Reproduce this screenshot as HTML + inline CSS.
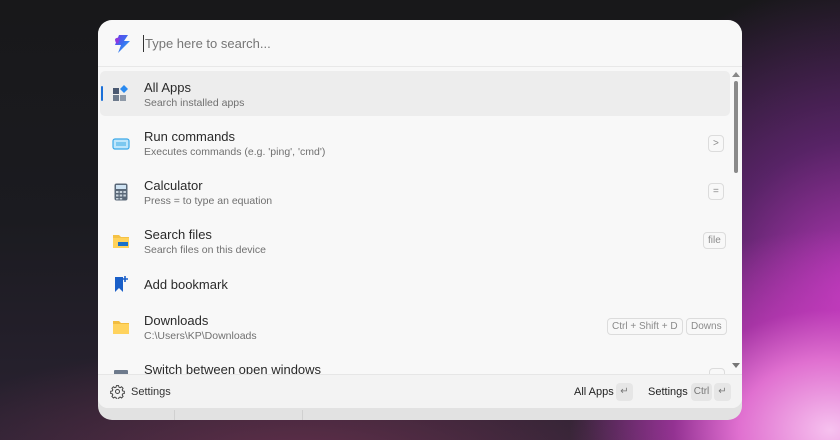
<!DOCTYPE html>
<html><head><meta charset="utf-8"><style>
*{margin:0;padding:0;box-sizing:border-box}
body{width:840px;height:440px;overflow:hidden;font-family:"Liberation Sans",sans-serif;position:relative;
background:
radial-gradient(ellipse 260px 200px at 830px 430px,#f6c0ee 0%,#e070d0 35%,rgba(200,60,190,0.6) 60%,rgba(120,40,130,0) 100%),
radial-gradient(ellipse 300px 320px at 860px 300px,rgba(200,60,200,0.95) 0%,rgba(120,40,140,0.65) 50%,rgba(40,30,60,0) 100%),
radial-gradient(ellipse 400px 120px at 300px 460px,rgba(110,50,80,0.8) 0%,rgba(60,30,50,0) 100%),
linear-gradient(180deg,#18181a 0%,#1b1b20 50%,#2a2232 100%);}
.win{position:absolute;left:98px;top:20px;width:644px;height:400px;border-radius:14px;background:#e2e2e2;overflow:hidden}
.main{position:absolute;left:0;top:0;width:644px;height:388px;background:#f8f8f8;border-radius:14px 14px 10px 10px;overflow:hidden}
.hdr{position:absolute;left:0;top:0;width:644px;height:47px;border-bottom:1px solid #e8e8e8}
.ph{position:absolute;left:47px;top:16px;font-size:13px;color:#767676}
.cur{position:absolute;left:45px;top:15px;width:1px;height:17px;background:#333}
.row{position:absolute;left:2px;width:630px}
.sel{background:#ededed;border-radius:5px}
.t{position:absolute;left:46px;font-size:13px;color:#2a2a2a}
.s{position:absolute;left:46px;font-size:10.5px;color:#707070}
.ic{position:absolute;left:14px}
.k{position:absolute;height:17px;border:1px solid #dcdcdc;border-radius:4px;font-size:10px;color:#8a8a8a;line-height:15px;padding:0 4px;background:#f8f8f8}
.foot{position:absolute;left:0;top:354px;width:644px;height:34px;background:#f3f3f3;border-top:1px solid #e6e6e6}
.fk{position:absolute;height:18px;border-radius:4px;background:#e6e6e6;font-size:10px;color:#777;line-height:18px;text-align:center}
</style></head><body>
<div class="win">
<div class="main">
<div class="hdr">
<svg style="position:absolute;left:15px;top:14px" width="18" height="20" viewBox="0 0 18 20"><defs><linearGradient id="g" x1="0" y1="0" x2="1" y2="1"><stop offset="0" stop-color="#6a3de8"/><stop offset="0.5" stop-color="#3a6ff0"/><stop offset="1" stop-color="#30c0f0"/></linearGradient></defs><path d="M6 1 L15 1 L11 7 L17 7 L5 19 L8 11 L2 11 Z" fill="url(#g)"/><path d="M2 5 Q4 3 7 4 L5 10 Q2 9 2 5Z" fill="#8a3be0"/></svg>
<div class="cur"></div><div class="ph">Type here to search...</div>
</div>
<div class="row sel" style="top:51px;height:45px"></div>
<div style="position:absolute;left:3px;top:66px;width:2px;height:15px;background:#1a6fd8;border-radius:1px"></div>
<svg class="ic" style="top:65px" width="18" height="17" viewBox="0 0 18 17"><rect x="1" y="3" width="6" height="6" fill="#4a5870"/><rect x="1" y="10" width="6" height="6" fill="#6d7a8c"/><rect x="8" y="10" width="6" height="6" fill="#8f9aa8"/><path d="M12 0 L16 4 L12 8 L8 4Z" fill="#2a8af0"/></svg>
<div class="t" style="top:60px">All Apps</div><div class="s" style="top:77px">Search installed apps</div>

<svg class="ic" style="top:117px" width="18" height="14" viewBox="0 0 18 14"><rect x="1" y="2" width="16" height="10" rx="2" fill="#bfe6fb" stroke="#3aa8e8" stroke-width="1.2"/><rect x="4" y="5" width="10" height="4" fill="#7cc8f0"/></svg>
<div class="t" style="top:109px">Run commands</div><div class="s" style="top:126px">Executes commands (e.g. 'ping', 'cmd')</div>
<div class="k" style="left:610px;top:115px">&gt;</div>

<svg class="ic" style="top:163px;left:16px" width="14" height="18" viewBox="0 0 14 18"><rect x="0.5" y="0.5" width="13" height="17" rx="2" fill="#5a6878"/><rect x="2" y="2" width="10" height="4" fill="#cfe3f3"/><g fill="#c9d3dc"><rect x="2" y="8" width="2.5" height="2"/><rect x="5.7" y="8" width="2.5" height="2"/><rect x="9.4" y="8" width="2.5" height="2"/><rect x="2" y="11.5" width="2.5" height="2"/><rect x="5.7" y="11.5" width="2.5" height="2"/><rect x="9.4" y="11.5" width="2.5" height="2"/><rect x="2" y="15" width="2.5" height="1.5"/><rect x="5.7" y="15" width="2.5" height="1.5"/></g></svg>
<div class="t" style="top:158px">Calculator</div><div class="s" style="top:175px">Press = to type an equation</div>
<div class="k" style="left:610px;top:163px">=</div>

<svg class="ic" style="top:213px" width="18" height="16" viewBox="0 0 18 16"><path d="M1 2 H7 L9 4 H17 V15 H1Z" fill="#f5c246"/><rect x="1" y="5" width="16" height="10" fill="#ffd25a"/><rect x="6" y="9" width="10" height="4" fill="#1a70c8"/></svg>
<div class="t" style="top:207px">Search files</div><div class="s" style="top:224px">Search files on this device</div>
<div class="k" style="left:605px;top:212px">file</div>

<svg class="ic" style="top:255px;left:16px" width="16" height="18" viewBox="0 0 16 18"><path d="M1 2 H9 V17 L5 13 L1 17Z" fill="#1a5fc8"/><path d="M11 1 V7 M8 4 H14" stroke="#1a5fc8" stroke-width="1.6"/></svg>
<div class="t" style="top:257px">Add bookmark</div>

<svg class="ic" style="top:299px" width="18" height="16" viewBox="0 0 18 16"><path d="M1 2 H7 L9 4 H17 V15 H1Z" fill="#f2bd40"/><rect x="1" y="5" width="16" height="10" fill="#ffd35e"/></svg>
<div class="t" style="top:293px">Downloads</div><div class="s" style="top:310px">C:\Users\KP\Downloads</div>
<div class="k" style="left:509px;top:298px">Ctrl + Shift + D</div>
<div class="k" style="left:588px;top:298px">Downs</div>

<div style="position:absolute;left:16px;top:350px;width:14px;height:6px;background:#6d7a8c;border-radius:1px"></div>
<div class="t" style="top:342px">Switch between open windows</div>
<div class="k" style="left:611px;top:348px;width:16px"></div>

<div style="position:absolute;left:634px;top:52px;width:0;height:0;border-left:4px solid transparent;border-right:4px solid transparent;border-bottom:5px solid #888"></div>
<div style="position:absolute;left:636px;top:61px;width:4px;height:92px;background:#8a8a8a;border-radius:2px"></div>
<div style="position:absolute;left:634px;top:343px;width:0;height:0;border-left:4px solid transparent;border-right:4px solid transparent;border-top:5px solid #777"></div>

<div class="foot">
<svg style="position:absolute;left:12px;top:9px" width="15" height="15" viewBox="0 0 24 24" fill="none" stroke="#444" stroke-width="1.6"><circle cx="12" cy="12" r="3.2"/><path d="M10.3 2.5h3.4l.6 2.6 1.9.8 2.3-1.4 2.4 2.4-1.4 2.3.8 1.9 2.6.6v3.4l-2.6.6-.8 1.9 1.4 2.3-2.4 2.4-2.300-1.4-1.9.8-.6 2.6h-3.4l-.6-2.6-1.9-.8-2.3 1.4-2.4-2.4 1.4-2.3-.8-1.9-2.6-.6v-3.4l2.6-.6.8-1.9-1.4-2.3 2.4-2.4 2.3 1.4 1.9-.8z"/></svg>
<div style="position:absolute;left:33px;top:11px;font-size:11px;color:#333">Settings</div>
<div style="position:absolute;left:476px;top:11px;font-size:11px;color:#222">All Apps</div>
<div class="fk" style="left:518px;top:8px;width:17px">↵</div>
<div style="position:absolute;left:550px;top:11px;font-size:11px;color:#222">Settings</div>
<div class="fk" style="left:593px;top:8px;width:21px">Ctrl</div>
<div class="fk" style="left:616px;top:8px;width:17px">↵</div>
</div>
</div>
<div style="position:absolute;left:76px;top:390px;width:1px;height:10px;background:#d0d0d0"></div>
<div style="position:absolute;left:204px;top:390px;width:1px;height:10px;background:#d0d0d0"></div>
</div>
</body></html>
